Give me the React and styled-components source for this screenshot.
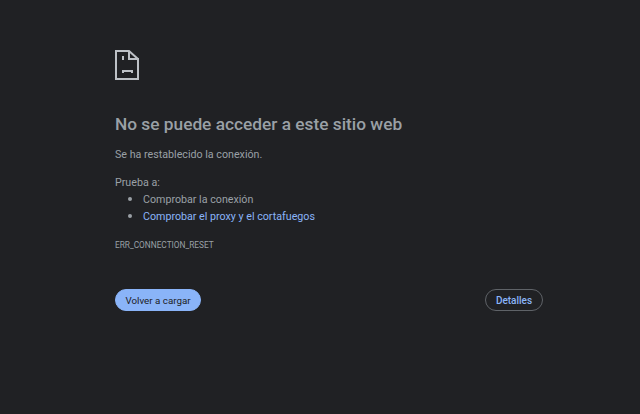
import React from 'react';
import styled, { createGlobalStyle } from 'styled-components';

const GlobalStyle = createGlobalStyle`
  html, body {
    margin: 0;
    padding: 0;
    height: 100%;
    background: #202124;
  }
`;

const Page = styled.div`
  box-sizing: border-box;
  width: 640px;
  height: 414px;
  padding: 50px 97px 0 115px;
  background: #202124;
  color: #9aa0a6;
  font-family: Roboto, "Noto Sans", sans-serif;
  font-size: 10.7px;
  overflow: hidden;
`;

const SadIcon = styled.svg`
  display: block;
  width: 24px;
  height: 30px;
`;

const Title = styled.h1`
  margin: 33px 0 0;
  color: #9aa0a6;
  font-size: 17.3px;
  font-weight: 500;
  line-height: 22px;
`;

const Summary = styled.p`
  margin: 12px 0 0;
  line-height: 16px;
`;

const TryLabel = styled.p`
  margin: 12px 0 0;
  line-height: 16px;
`;

const Suggestions = styled.ul`
  margin: -1px 0 0;
  padding: 0 0 0 28px;
  line-height: 17px;
`;

const Suggestion = styled.li`
  height: 17px;
  color: ${(p) => (p.$link ? '#8ab4f8' : '#9aa0a6')};
  &::marker {
    color: #9aa0a6;
    font-size: 13px;
  }
`;

const ErrorCode = styled.div`
  margin-top: 15px;
  font-size: 8.3px;
  line-height: 12px;
`;

const Buttons = styled.div`
  display: flex;
  justify-content: space-between;
  align-items: center;
  margin-top: 38px;
`;

const Button = styled.button`
  box-sizing: border-box;
  height: 22px;
  padding: 0;
  border-radius: 11px;
  font-family: inherit;
  font-size: ${(p) => (p.$primary ? '9.8px' : '10px')};
  font-weight: ${(p) => (p.$primary ? 400 : 500)};
  border: 1px solid ${(p) => (p.$primary ? '#8ab4f8' : '#5f6368')};
  background: ${(p) => (p.$primary ? '#8ab4f8' : '#202124')};
  color: ${(p) => (p.$primary ? '#202124' : '#8ab4f8')};
  width: ${(p) => (p.$primary ? '86px' : '58px')};
`;

export default function App() {
  return (
    <>
      <GlobalStyle />
      <Page>
        <SadIcon viewBox="0 0 24 30" fill="none" stroke="#bdc1c6" strokeWidth="2">
          <path d="M14 1H1v28h22V9h-9V1l9 8" />
          <path d="M8 6v4" />
          <path d="M8 23v-2h9v2" />
        </SadIcon>
        <Title>No se puede acceder a este sitio web</Title>
        <Summary>Se ha restablecido la conexión.</Summary>
        <TryLabel>Prueba a:</TryLabel>
        <Suggestions>
          <Suggestion>Comprobar la conexión</Suggestion>
          <Suggestion $link>Comprobar el proxy y el cortafuegos</Suggestion>
        </Suggestions>
        <ErrorCode>ERR_CONNECTION_RESET</ErrorCode>
        <Buttons>
          <Button $primary>Volver a cargar</Button>
          <Button>Detalles</Button>
        </Buttons>
      </Page>
    </>
  );
}
